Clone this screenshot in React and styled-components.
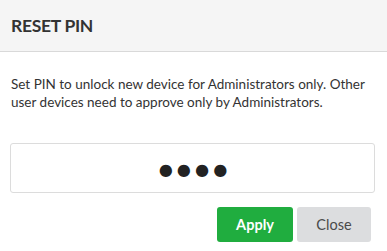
import React from 'react'
import styled, { createGlobalStyle } from 'styled-components'

const GlobalStyle = createGlobalStyle`
  html, body {
    margin: 0;
    padding: 0;
    background: #fff;
  }
  body {
    font-family: Lato, 'Open Sans', sans-serif;
    color: #333;
  }
`

const Modal = styled.div`
  width: 387px;
  height: 251px;
  background: #fff;
`

const Header = styled.div`
  height: 52px;
  box-sizing: border-box;
  background: #f5f5f5;
  border-bottom: 1px solid #d9d9d9;
  display: flex;
  align-items: center;
  padding: 0 11px;
`

const Title = styled.h4`
  margin: 0;
  font-size: 17.5px;
  font-weight: 700;
  color: #333;
  letter-spacing: -0.3px;
`

const Body = styled.div`
  padding: 23px 12px 0 10px;
`

const Message = styled.p`
  margin: 0 0 0 1px;
  font-size: 13.5px;
  line-height: 18px;
  color: #333;
`

const PinInput = styled.input`
  display: block;
  box-sizing: border-box;
  width: 365px;
  height: 50px;
  margin-top: 32px;
  border: 1px solid #dcdcdc;
  border-radius: 3px;
  text-align: center;
  font-family: Lato, sans-serif;
  font-size: 33px;
  letter-spacing: -1px;
  color: #222;
  outline: none;
`

const Actions = styled.div`
  display: flex;
  justify-content: flex-end;
  gap: 4px;
  margin-top: 14px;
  padding-right: 4px;
`

const Button = styled.button`
  width: ${p => p.$width}px;
  height: 35px;
  border: 0;
  border-radius: 3px;
  font-family: Lato, sans-serif;
  font-size: 14.5px;
  font-weight: ${p => (p.$primary ? 700 : 400)};
  background: ${p => (p.$primary ? '#20ad3f' : '#dcdddf')};
  color: ${p => (p.$primary ? '#fff' : '#4a4a4a')};
  cursor: pointer;
`

export default function App() {
  return (
    <>
      <GlobalStyle />
      <Modal>
        <Header>
          <Title>RESET PIN</Title>
        </Header>
        <Body>
          <Message>
            Set PIN to unlock new device for Administrators only. Other user devices need to approve only by Administrators.
          </Message>
          <PinInput type="password" defaultValue="1234" readOnly />
          <Actions>
            <Button $primary $width={76}>Apply</Button>
            <Button $width={74}>Close</Button>
          </Actions>
        </Body>
      </Modal>
    </>
  )
}
